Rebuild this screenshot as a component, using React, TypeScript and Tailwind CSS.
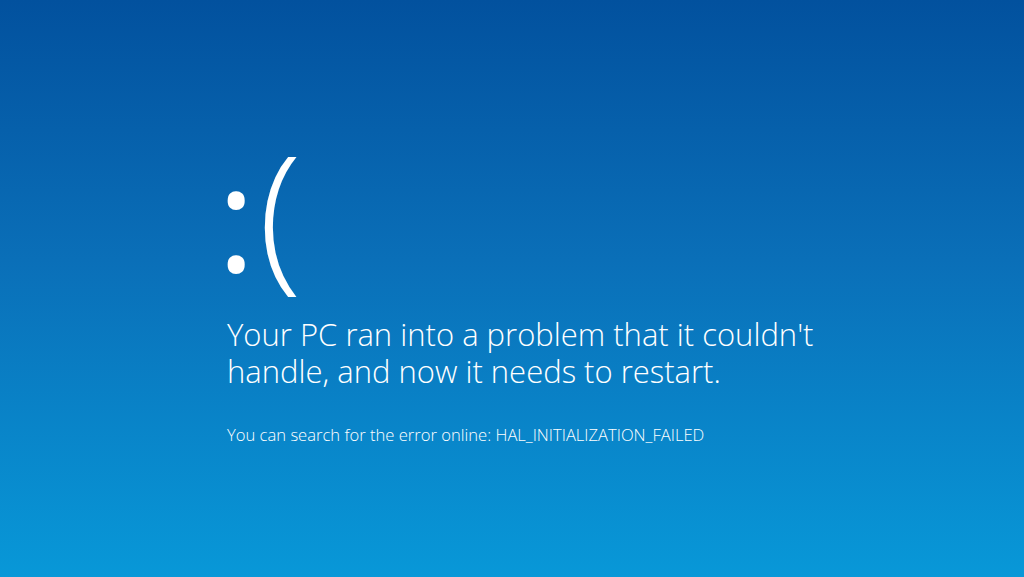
export default function App() {
  return (
    <div
      className="w-[1024px] h-[577px] overflow-hidden bg-[linear-gradient(to_bottom,#02519e_0%,#0a6fb8_45%,#0898d8_100%)] text-white flex flex-col"
      style={{ fontFamily: '"Open Sans", "Noto Sans", sans-serif' }}
    >
      <div className="pl-[227px] pt-[110px]">
        <div className="h-[200px] leading-[200px] flex items-baseline -ml-[10px]">
          <span className="text-[146px] font-normal">:</span>
          <span className="text-[160px] font-light ml-[3px]">(</span>
        </div>
        <div className="mt-[6px] text-[31px] leading-[37px] font-light w-[620px]">
          Your PC ran into a problem that it couldn't handle, and now it needs to restart.
        </div>
        <div className="mt-[35px] text-[16.6px] leading-[20px] font-light">
          You can search for the error online: HAL_INITIALIZATION_FAILED
        </div>
      </div>
    </div>
  );
}
